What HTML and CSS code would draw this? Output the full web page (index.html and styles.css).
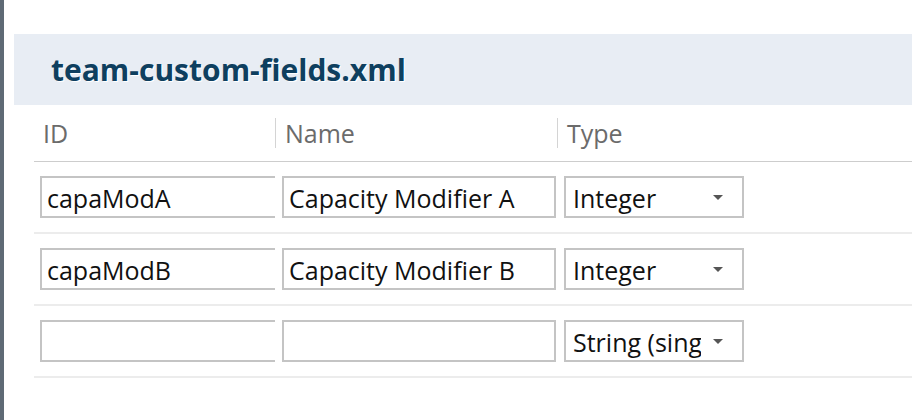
FILE: index.html
```html
<!DOCTYPE html>
<html>
<head>
<meta charset="utf-8">
<link rel="stylesheet" href="styles.css">
</head>
<body>
<div class="page">
  <div class="strip"></div>
  <div class="main">
    <div class="band"><h1 class="title">team-custom-fields.xml</h1></div>
    <div class="table">
      <div class="row head">
        <div class="cell"><span class="label">ID</span></div>
        <div class="cell sep"><span class="label">Name</span></div>
        <div class="cell sep"><span class="label">Type</span></div>
      </div>
      <div class="row">
        <div class="cell clip"><div class="input wide">capaModA</div></div>
        <div class="cell"><div class="input">Capacity Modifier A</div></div>
        <div class="cell"><div class="select"><span class="val">Integer</span><span class="arrow"></span></div></div>
      </div>
      <div class="row">
        <div class="cell clip"><div class="input wide">capaModB</div></div>
        <div class="cell"><div class="input">Capacity Modifier B</div></div>
        <div class="cell"><div class="select"><span class="val">Integer</span><span class="arrow"></span></div></div>
      </div>
      <div class="row">
        <div class="cell clip"><div class="input wide"></div></div>
        <div class="cell"><div class="input"></div></div>
        <div class="cell"><div class="select"><span class="val">String (single line)</span><span class="arrow"></span></div></div>
      </div>
    </div>
  </div>
</div>
</body>
</html>
```
FILE: styles.css
```css
html, body { margin: 0; padding: 0; background: #fff; }
body { font-family: "Open Sans", "Noto Sans", sans-serif; width: 912px; height: 420px; overflow: hidden; }
.page { display: flex; height: 420px; }
.strip { width: 4px; background: #5f6a75; flex: none; }
.main { flex: 1; margin-left: 10px; padding-top: 34px; }
.band { background: #e8edf4; height: 71px; display: flex; align-items: center; padding-left: 37px; }
.title { margin: 0; font-size: 30px; font-weight: 700; color: #0e3f5f; text-shadow: 1px 1px 0 #fff; letter-spacing: 0; line-height: 1; }
.table { margin-left: 20px; }
.row { display: grid; grid-template-columns: 241px 282px 1fr; border-bottom: 2px solid #ececec; height: 72px; align-items: center; box-sizing: border-box; }
.row.head { height: 57px; border-bottom: 1px solid #cdcdcd; align-items: center; }
.cell { padding-left: 6px; height: 42px; display: flex; align-items: center; }
.row .cell + .cell { padding-left: 7px; }
.head .cell { height: 30px; padding-left: 9px; margin-top: -1px; }
.head .cell.sep { border-left: 1px solid #d4d4d4; padding-left: 9px; }
.label { font-size: 25px; color: #6b6b6b; }
.clip { overflow: hidden; }
.input { box-sizing: border-box; height: 42px; width: 274px; border: 2px solid #c4c4c4; font-size: 25px; color: #111; padding-left: 5px; padding-top: 2px; display: flex; align-items: center; white-space: nowrap; overflow: hidden; }
.input.wide { width: 260px; flex: none; }
.select { box-sizing: border-box; height: 42px; width: 180px; border: 2px solid #c4c4c4; font-size: 25px; color: #111; padding-left: 7px; padding-top: 2px; display: flex; align-items: center; }
.val { width: 128px; overflow: hidden; white-space: nowrap; flex: none; }
.arrow { margin-left: 12px; margin-top: -2px; width: 0; height: 0; border-left: 5px solid transparent; border-right: 5px solid transparent; border-top: 5px solid #555; }
```
